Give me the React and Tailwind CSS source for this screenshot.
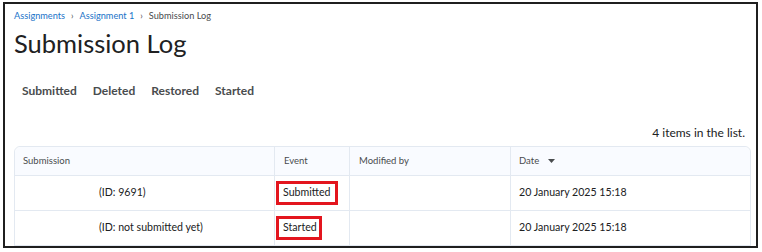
export default function App() {
  const font = { fontFamily: 'Lato, "Noto Sans", sans-serif' };
  return (
    <div className="w-[762px] h-[252px] bg-white relative" style={font}>
      <div className="absolute left-[3px] top-[2px] w-[755px] h-[246px] border-2 border-[#1f1f1f] overflow-hidden pl-[9px]">
        <div className="flex items-center gap-[6px] text-[9.2px] leading-[12px] mt-[6px] text-[#494c4e]">
          <span className="text-[#1a73c8]">Assignments</span>
          <span className="text-[9px]">›</span>
          <span className="text-[#1a73c8]">Assignment 1</span>
          <span className="text-[9px]">›</span>
          <span>Submission Log</span>
        </div>
        <div className="text-[25.5px] leading-[30px] mt-[6px] text-[#202122]">Submission Log</div>
        <div className="flex gap-[16px] ml-[8px] mt-[25px] text-[12px] leading-[16px] font-bold text-[#494c4e]">
          <span>Submitted</span>
          <span>Deleted</span>
          <span>Restored</span>
          <span>Started</span>
        </div>
        <div className="flex justify-end pr-[11px] mt-[26px] text-[12px] leading-[16px] text-[#202122]">
          4 items in the list.
        </div>
        <div className="mt-[5px] w-[737px] border border-[#e3e9f1] rounded-t-[6px]">
          <div className="grid grid-cols-[259px_75px_161px_1fr] h-[29px] bg-[#f9fbff] text-[9.5px] text-[#494c4e] border-b border-[#e3e9f1] rounded-t-[6px]">
            <div className="flex items-center pl-[8px]">Submission</div>
            <div className="flex items-center pl-[9px] border-l border-[#e3e9f1]">Event</div>
            <div className="flex items-center pl-[9px] border-l border-[#e3e9f1]">Modified by</div>
            <div className="flex items-center pl-[8px] border-l border-[#e3e9f1] gap-[9px]">
              Date
              <svg width="7" height="4" viewBox="0 0 7 4"><path d="M0 0h7L3.5 4z" fill="#494c4e" /></svg>
            </div>
          </div>
          {[
            ["(ID: 9691)", "Submitted", "w-[62px]"],
            ["(ID: not submitted yet)", "Started", "w-[46px]"],
          ].map(([id, ev, w], i) => (
            <div key={i} className="grid grid-cols-[259px_75px_161px_1fr] h-[35px] text-[10.6px] text-[#202122] border-b border-[#e3e9f1]">
              <div className="flex items-center pl-[84px]">{id}</div>
              <div className="flex items-center pl-[1px] border-l border-[#e3e9f1]">
                <div className={`${w} h-[24px] border-[3px] border-[#e3151e] flex items-center pl-[4px]`}>{ev}</div>
              </div>
              <div className="border-l border-[#e3e9f1]"></div>
              <div className="flex items-center pl-[8px] border-l border-[#e3e9f1]">20 January 2025 15:18</div>
            </div>
          ))}
        </div>
      </div>
    </div>
  );
}
